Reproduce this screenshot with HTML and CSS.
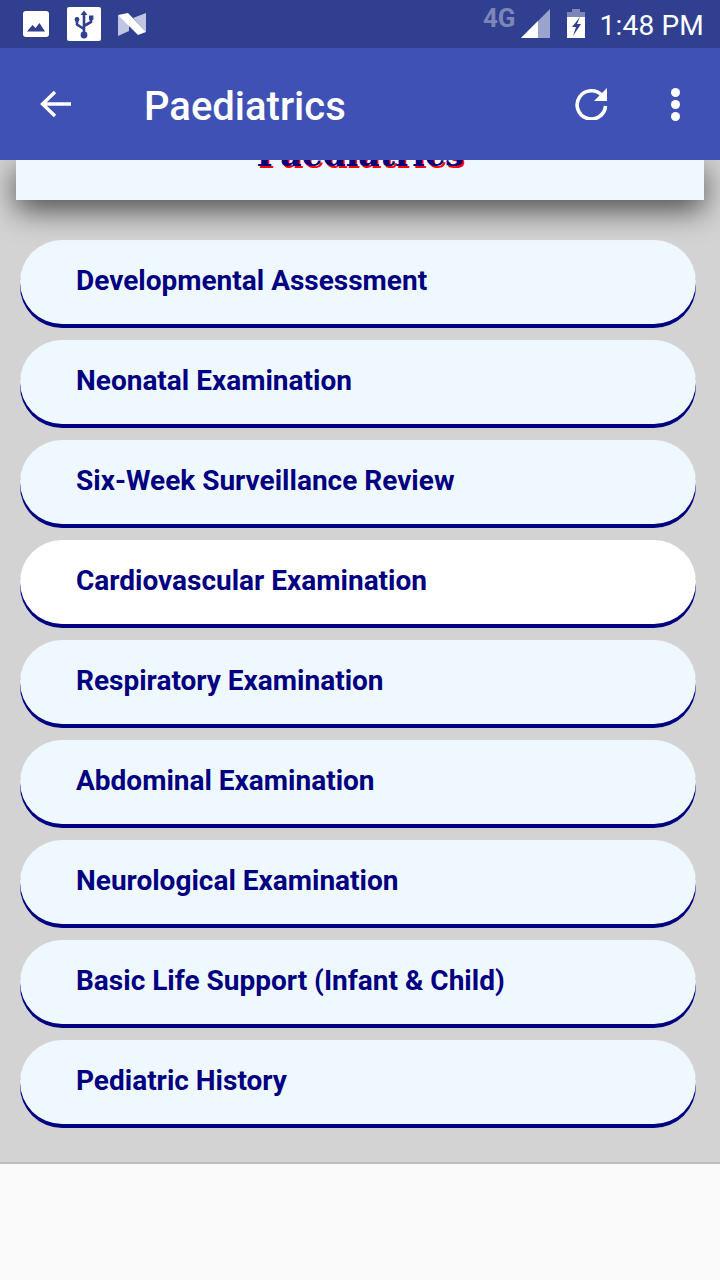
FILE: index.html
```html
<!DOCTYPE html>
<html lang="en">
<head>
  <meta charset="UTF-8" />
  <title>Paediatrics</title>
  <link rel="stylesheet" href="styles.css">
</head>
<body>

  <!-- Status bar -->
  <div class="status-bar">
    <div class="status-left">
      <svg class="ic-photo" width="26" height="26" viewBox="0 0 26 26">
        <rect width="26" height="26" rx="3" fill="#fff"/>
        <path d="M4 20.5 L9.5 14 L12.5 17 L16.5 12 L22 20.5 Z" fill="#303f8f"/>
      </svg>
      <svg class="ic-usb" width="34" height="34" viewBox="0 0 34 34">
        <rect width="34" height="34" rx="2" fill="#fff"/>
        <path d="M17 27 V6 M17 22 L10 17.5 V13 M17 19 L24 15 V11" fill="none" stroke="#303f8f" stroke-width="2.600"/>
        <path d="M17 3.5 L20.5 8 H13.5 Z" fill="#303f8f"/>
        <circle cx="17" cy="28" r="3.4" fill="#303f8f"/>
        <circle cx="10" cy="12.5" r="2.4" fill="#303f8f"/>
        <rect x="22" y="8.5" width="4.4" height="4.4" fill="#303f8f"/>
      </svg>
      <svg class="ic-n" width="30" height="26" viewBox="0 0 30 26">
        <path d="M1 4 V25 L12 20 V10 Z M16 7 L29 2 V21 Z" fill="#c0c6e2"/>
        <path d="M1 4 L11 2 L29 21 L21 24 Z" fill="#fff"/>
      </svg>
    </div>
    <div class="status-right">
      <span class="net">4G</span>
      <svg class="ic-signal" width="30" height="30" viewBox="0 0 30 30">
        <path d="M0 29 L29 0 V29 Z" fill="#9aa3cc"/>
        <path d="M0 29 L17 12 V29 Z" fill="#fff"/>
      </svg>
      <svg class="ic-battery" width="20" height="30" viewBox="0 0 20 30">
        <path d="M6 0 H14 V3 H19 V8 H1 V3 H6 Z" fill="#7d86b8"/>
        <path d="M1 8 H19 V29 H1 Z" fill="#fff"/>
        <path d="M14 8 L6 18 H10 L7 27 L15 15 H11 Z" fill="#303f8f"/>
      </svg>
      <span class="clock">1:48 PM</span>
    </div>
  </div>

  <!-- Toolbar -->
  <div class="toolbar">
    <svg class="ic-back" width="32" height="32" viewBox="0 0 32 32">
      <path d="M33 16 H4 M16 4 L3.500 16 L16 28" fill="none" stroke="#fff" stroke-width="3.400"/>
    </svg>
    <div class="toolbar-title">Paediatrics</div>
    <svg class="ic-refresh" width="34" height="34" viewBox="0 0 34 34">
      <path d="M27 9.500 A14.200 14.200 0 1 0 30.500 20" fill="none" stroke="#fff" stroke-width="3.600"/>
      <path d="M32 2 V15 H19 Z" fill="#fff"/>
    </svg>
    <div class="dots"><i></i><i></i><i></i></div>
  </div>

  <!-- Web content -->
  <div class="content">
    <div class="title-card">
      <h1>Paediatrics</h1>
    </div>

    <ul class="topics">
      <li>Developmental Assessment</li>
      <li>Neonatal Examination</li>
      <li>Six-Week Surveillance Review</li>
      <li class="active">Cardiovascular Examination</li>
      <li>Respiratory Examination</li>
      <li>Abdominal Examination</li>
      <li>Neurological Examination</li>
      <li>Basic Life Support (Infant &amp; Child)</li>
      <li>Pediatric History</li>
    </ul>
  </div>

  <div class="footer"></div>

</body>
</html>
```

FILE: styles.css
```css
html, body {
  margin: 0;
  padding: 0;
}

body {
  width: 720px;
  height: 1280px;
  overflow: hidden;
  display: flex;
  flex-direction: column;
  font-family: 'Roboto', sans-serif;
  background-color: #fafafa;
}

.status-bar {
  height: 48px;
  flex: none;
  background-color: #303f8f;
  color: #fff;
  display: flex;
  justify-content: space-between;
  align-items: center;
  position: relative;
  z-index: 3;
}

.status-left {
  display: flex;
  align-items: center;
  padding-left: 23px;
}

.ic-usb {
  margin-left: 18px;
}

.ic-n {
  margin-left: 16px;
}

.status-right {
  display: flex;
  align-items: center;
  padding-right: 16px;
}

.net {
  font-size: 26px;
  font-weight: 700;
  color: #7d86b8;
  margin-right: 5px;
  margin-top: -12px;
}

.ic-signal {
  margin-top: 0;
}

.ic-battery {
  margin-left: 15px;
  margin-top: 0;
}

.clock {
  font-size: 28px;
  margin-left: 14px;
  margin-top: 2px;
  letter-spacing: 0.200px;
}

.toolbar {
  height: 112px;
  flex: none;
  background-color: #3f51b5;
  color: #fff;
  display: flex;
  align-items: center;
  padding-left: 39px;
  position: relative;
  z-index: 2;
}

.toolbar-title {
  font-size: 40px;
  font-weight: 500;
  margin-left: 73px;
  margin-top: 4px;
  flex: 1;
}

.ic-back {
  margin-top: 0;
}

.ic-refresh {
  margin-top: -2px;
}

.dots {
  width: 12px;
  margin-left: 61px;
  margin-right: 38px;
  display: flex;
  flex-direction: column;
  gap: 3px;
  margin-top: 0;
}

.dots i {
  display: block;
  width: 9px;
  height: 9px;
  margin-left: 1px;
  border-radius: 50%;
  background-color: #fff;
}

.content {
  height: 1004px;
  flex: none;
  box-sizing: border-box;
  background-color: #d3d3d3;
  border-bottom: 2px solid #bdbdbd;
  overflow: hidden;
}

.title-card {
  height: 40px;
  margin: 0 16px;
  background-color: #f0f8ff;
  box-shadow: 0 10px 30px rgba(0, 0, 0, 0.65);
  text-align: center;
  position: relative;
}

.title-card h1 {
  margin: 0;
  font-family: 'DejaVu Serif', serif;
  font-size: 33px;
  line-height: 40px;
  font-weight: 700;
  color: #000080;
  text-shadow: 2px 2px 0 #ff0000;
  transform: translateY(-25px);
}

.topics {
  list-style: none;
  margin: 40px 0 0 20px;
  padding: 0;
  width: 676px;
}

.topics li {
  box-sizing: border-box;
  height: 84px;
  line-height: 81px;
  margin-bottom: 16px;
  padding-left: 56px;
  border-radius: 42px;
  background-color: #f0f8ff;
  box-shadow: 0 4px 0 #000080;
  color: #000080;
  font-size: 28px;
  font-weight: 700;
}

.topics li.active {
  background-color: #fff;
}

.footer {
  flex: 1;
  background-color: #fafafa;
}
```
